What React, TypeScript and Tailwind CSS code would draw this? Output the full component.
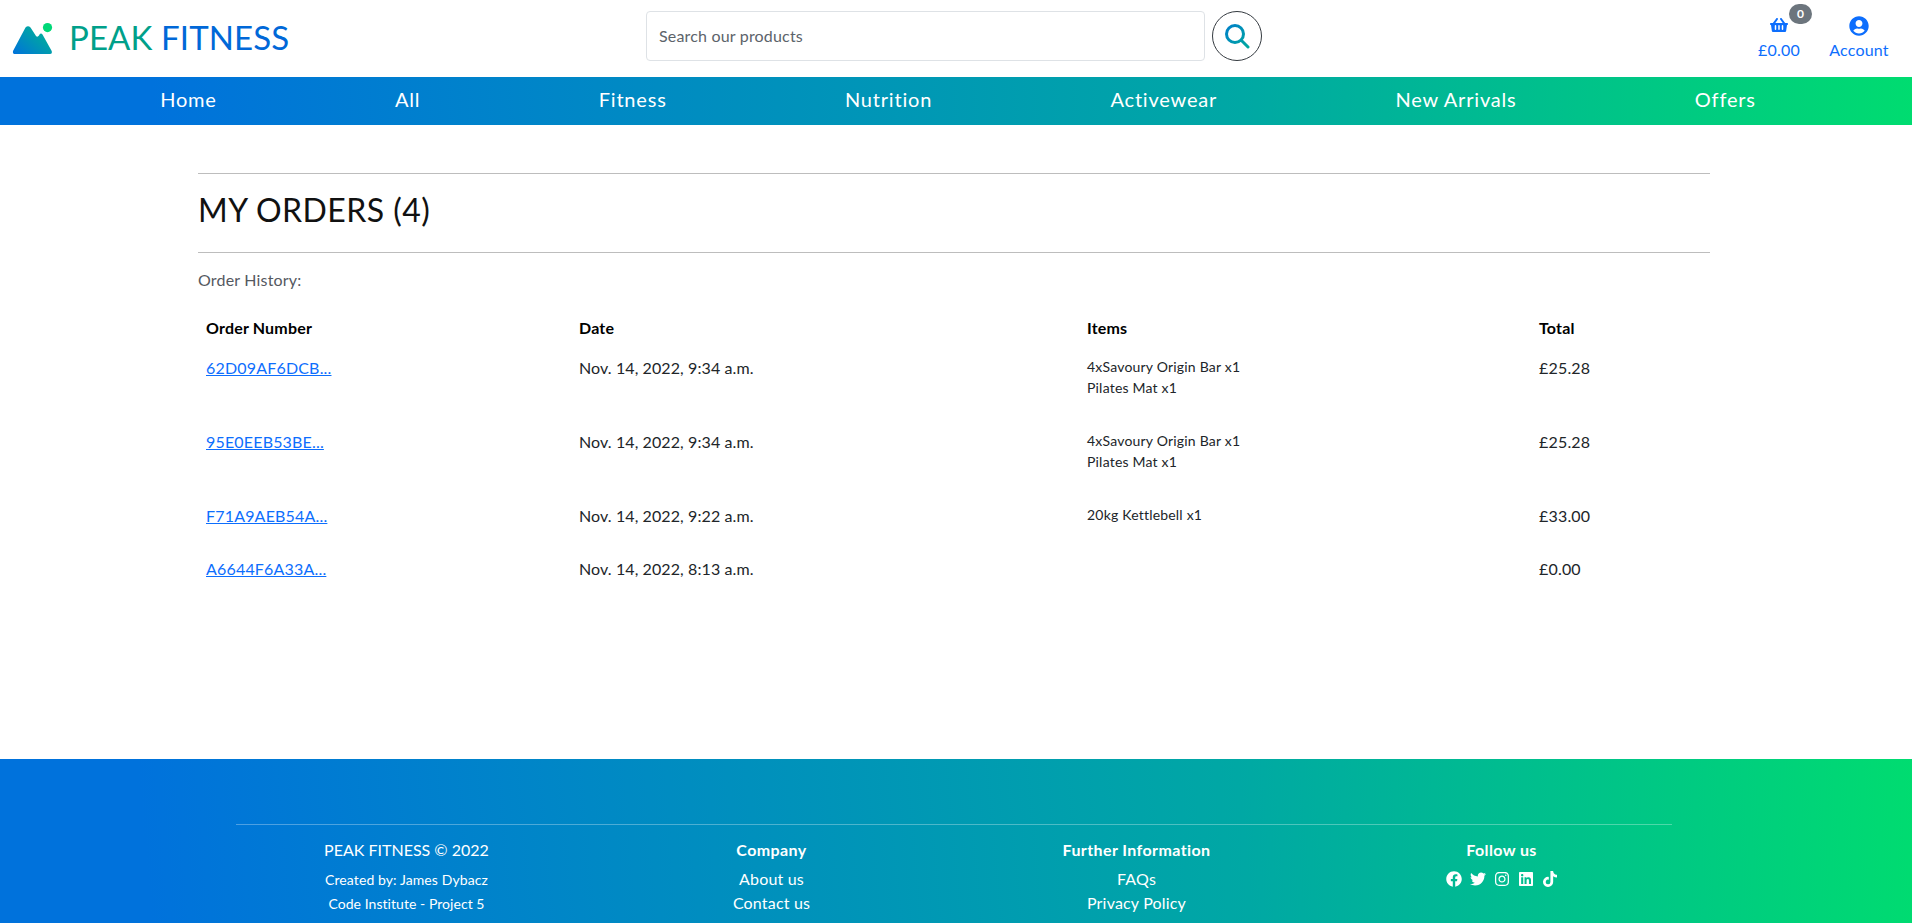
import { FaFacebook, FaTwitter, FaInstagram, FaLinkedin, FaTiktok, FaShoppingBasket, FaUserCircle } from "react-icons/fa";

const nav = ["Home", "All", "Fitness", "Nutrition", "Activewear", "New Arrivals", "Offers"];
const orders = [
  { id: "62D09AF6DCB...", date: "Nov. 14, 2022, 9:34 a.m.", items: ["4xSavoury Origin Bar x1", "Pilates Mat x1"], total: "£25.28" },
  { id: "95E0EEB53BE...", date: "Nov. 14, 2022, 9:34 a.m.", items: ["4xSavoury Origin Bar x1", "Pilates Mat x1"], total: "£25.28" },
  { id: "F71A9AEB54A...", date: "Nov. 14, 2022, 9:22 a.m.", items: ["20kg Kettlebell x1"], total: "£33.00" },
  { id: "A6644F6A33A...", date: "Nov. 14, 2022, 8:13 a.m.", items: [], total: "£0.00" },
];

function Logo() {
  return (
    <svg width="42" height="34" viewBox="0 0 42 34" className="shrink-0">
      <defs>
        <linearGradient id="m" x1="0" y1="1" x2="1" y2="0.2">
          <stop offset="0" stopColor="#0072dc" />
          <stop offset="1" stopColor="#00b592" />
        </linearGradient>
      </defs>
      <circle cx="35.5" cy="4.6" r="4.6" fill="#00d878" />
      <path d="M1 28 L13.5 4.5 Q16 2 18.5 4.5 L24 13 Q25.5 14.5 27 12.5 L27.5 11.5 Q29 9.5 30.5 11.5 L39.7 28 Q40.5 31 38 31 L2.5 31 Q0.5 31 1 28 Z" fill="url(#m)" />
    </svg>
  );
}

function SearchIcon() {
  return (
    <svg width="26" height="26" viewBox="0 0 26 26" fill="none">
      <defs>
        <linearGradient id="s" x1="0" y1="0" x2="1" y2="1">
          <stop offset="0" stopColor="#0080c8" />
          <stop offset="1" stopColor="#00a8a0" />
        </linearGradient>
      </defs>
      <path d="M11 2.5a8.5 8.5 0 1 0 0 17a8.5 8.5 0 1 0 0-17ZM17 17l7 7" stroke="url(#s)" strokeWidth="3" strokeLinecap="round" />
    </svg>
  );
}

export default function App() {
  return (
    <div className="h-screen overflow-hidden bg-white text-[#212529] tracking-[0.18px] font-['Lato','Noto_Sans',sans-serif]">
      <header className="h-[77px] flex items-start relative">
        <div className="w-[646px] pl-3 pt-[21px] flex items-center shrink-0">
          <Logo />
          <span className="ml-[15px] mb-[5px] text-[33px] leading-none whitespace-nowrap tracking-[0.1px]">
            <span className="text-[#00a08a]">PEAK</span> <span className="text-[#0068d8]">FITNESS</span>
          </span>
        </div>
        <div className="flex items-center pt-[11px]">
          <div className="w-[559px] h-[50px] border border-[#dee2e6] rounded flex items-center px-3 text-base text-[#5c636a]">Search our products</div>
          <button className="ml-[7px] w-[50px] h-[50px] rounded-full border border-[#343a40] flex items-center justify-center"><SearchIcon /></button>
        </div>
        <div className="ml-auto flex items-start text-[#0d6efd] text-base pr-[13px] pt-[11px]">
          <div className="relative w-[80px] flex flex-col items-center">
            <FaShoppingBasket className="text-[18px] mt-[5px] mb-[4px]" />
            <span className="absolute -top-[7px] left-[50px] w-[23px] h-[20px] rounded-full bg-[#6c757d] text-white text-[12px] font-bold flex items-center justify-center">0</span>
            <span>£0.00</span>
          </div>
          <div className="w-[80px] flex flex-col items-center">
            <FaUserCircle className="text-[20px] mt-[5px] mb-[2px]" />
            <span>Account</span>
          </div>
        </div>
      </header>

      <nav className="h-[48px] bg-[linear-gradient(88deg,#0072dc_8%,#00a8a4_65%,#00dc70_100%)] pl-[71px] pr-[67px] pb-[4px] flex items-center justify-around text-white text-[20px] tracking-[0.8px]">
        {nav.map((n) => <a key={n}>{n}</a>)}
      </nav>

      <main className="h-[634px] pt-[48px] pl-[198px] pr-[202px]">
        <hr className="border-t border-[#bdbdbd]" />
        <h1 className="h-[78px] pb-[7px] flex items-center text-[32px] leading-none text-[#111111] tracking-[0.45px]">MY ORDERS (4)</h1>
        <hr className="border-t border-[#bdbdbd]" />
        <p className="mt-[15px] mb-[16px] leading-6 text-[#55595f]">Order History:</p>
        <table className="w-full table-fixed text-base text-black">
          <colgroup>
            <col className="w-[373px]" />
            <col className="w-[508px]" />
            <col className="w-[452px]" />
            <col />
          </colgroup>
          <thead>
            <tr className="text-left">
              <th className="p-2 font-bold">Order Number</th>
              <th className="p-2 font-bold">Date</th>
              <th className="p-2 font-bold">Items</th>
              <th className="p-2 font-bold">Total</th>
            </tr>
          </thead>
          <tbody>
            {orders.map((o) => (
              <tr key={o.id} className="align-top">
                <td className="p-2"><a className="text-[#0d6efd] underline">{o.id}</a></td>
                <td className="p-2 text-[#212529] tracking-[0.1px]">{o.date}</td>
                <td className="p-2 text-sm leading-[21px] text-[#212529] tracking-[0.2px]">
                  {o.items.length > 0 && <ul className="mb-4">{o.items.map((i) => <li key={i}>{i}</li>)}</ul>}
                </td>
                <td className="p-2 text-[#212529]">{o.total}</td>
              </tr>
            ))}
          </tbody>
        </table>
      </main>

      <footer className="h-[202px] bg-[linear-gradient(85deg,#0072dc_8%,#00a8a4_65%,#00dc70_100%)] text-white pt-[65px]">
        <div className="w-[1460px] ml-[224px]">
          <hr className="mx-3 border-t border-white/30" />
          <div className="grid grid-cols-4 text-center pt-[13px]">
            <div>
              <p className="leading-6 tracking-normal">PEAK FITNESS © 2022</p>
              <p className="text-sm leading-[21px] mt-[7px] tracking-[0.1px]">Created by: James Dybacz</p>
              <p className="text-sm leading-[21px] mt-[3px] tracking-[0.05px]">Code Institute - Project 5</p>
            </div>
            <div>
              <p className="leading-6 font-bold tracking-[0.4px]">Company</p>
              <p className="leading-6 mt-[5px]">About us</p>
              <p className="leading-6">Contact us</p>
            </div>
            <div>
              <p className="leading-6 font-bold tracking-[0.4px]">Further Information</p>
              <p className="leading-6 mt-[5px]">FAQs</p>
              <p className="leading-6">Privacy Policy</p>
            </div>
            <div>
              <p className="leading-6 font-bold tracking-[0.4px]">Follow us</p>
              <div className="mt-[9px] flex justify-center gap-[8px] text-[16px]">
                <FaFacebook /><FaTwitter /><FaInstagram /><FaLinkedin /><FaTiktok />
              </div>
            </div>
          </div>
        </div>
      </footer>
    </div>
  );
}
